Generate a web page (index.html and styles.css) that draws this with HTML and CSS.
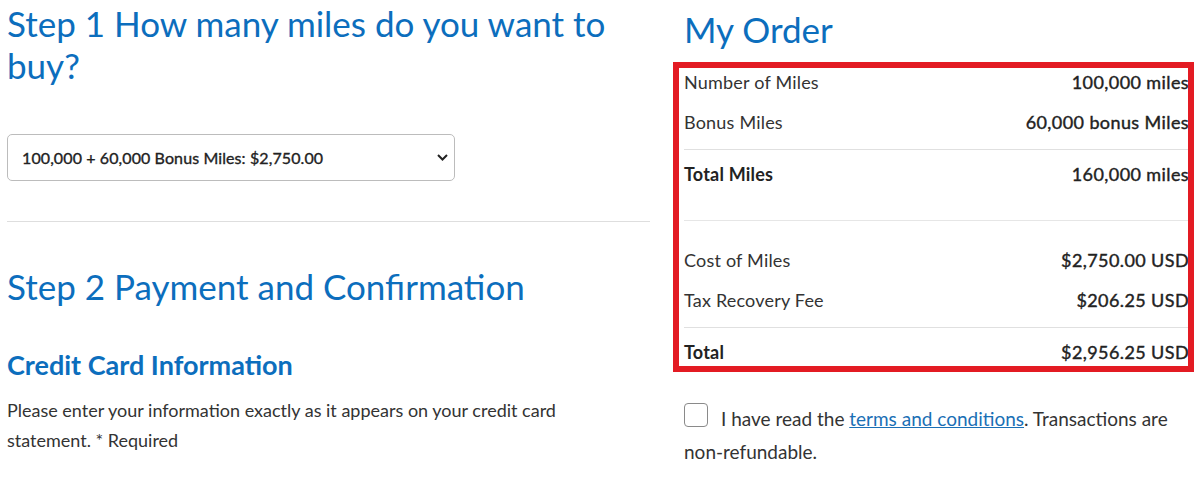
FILE: index.html
```html
<!DOCTYPE html>
<html lang="en">
<head>
	<meta charset="UTF-8">
	<title>Buy Miles</title>
	<link rel="stylesheet" href="styles.css">
</head>
<body>
	<div class="page">
		<div class="steps">
			<h1 class="step_title first">Step 1 How many miles do you want to buy?</h1>
			<div class="select_box">
				<span>100,000 + 60,000 Bonus Miles: $2,750.00</span>
				<svg width="11" height="7" viewBox="0 0 11 7"><path d="M1 1l4.5 4.5L10 1" fill="none" stroke="#222" stroke-width="2"/></svg>
			</div>
			<div class="divider"></div>
			<h2 class="step_title">Step 2 Payment and Confirmation</h2>
			<h3 class="sub_title">Credit Card Information</h3>
			<p class="note">Please enter your information exactly as it appears on your credit card statement. * Required</p>
		</div>
		<div class="order">
			<h2 class="order_title">My Order</h2>
			<div class="order_table">
				<div class="row"><span>Number of Miles</span><b>100,000 miles</b></div>
				<div class="row"><span>Bonus Miles</span><b>60,000 bonus Miles</b></div>
				<div class="row total"><span>Total Miles</span><b>160,000 miles</b></div>
				<div class="group">
					<div class="row"><span>Cost of Miles</span><b>$2,750.00 USD</b></div>
					<div class="row"><span>Tax Recovery Fee</span><b>$206.25 USD</b></div>
					<div class="row total"><span>Total</span><b>$2,956.25 USD</b></div>
				</div>
				<div class="frame"></div>
			</div>
			<p class="terms"><span class="check"></span>I have read the <a href="#">terms and conditions</a>. Transactions are non-refundable.</p>
		</div>
	</div>
</body>
</html>
```
FILE: styles.css
```css
body{
	margin:0;
	background:#fff;
	font-family:"Lato","Open Sans",sans-serif;
	color:#333;
}
.page{
	display:flex;
	padding:0 7px;
	gap:34px;
}
.steps{
	width:643px;
}
.order{
	width:505px;
}
.step_title,.order_title{
	font-size:35px;
	line-height:42px;
	font-weight:400;
	color:#0c6ebd;
	margin:0;
}
.step_title.first{
	margin-top:2px;
}
.select_box{
	margin-top:48px;
	width:448px;
	height:47px;
	box-sizing:border-box;
	border:1px solid #bcbcbc;
	border-radius:5px;
	padding:0 6px 0 14px;
	display:flex;
	align-items:center;
	justify-content:space-between;
	font-size:16px;
	letter-spacing:0.1px;
	color:#222;
	-webkit-text-stroke:0.35px #222;
}
.divider{
	margin-top:40px;
	height:1px;
	background:#dedede;
}
.steps h2.step_title{
	margin-top:43px;
}
.sub_title{
	margin:42px 0 0;
	font-size:27px;
	line-height:32px;
	font-weight:700;
	color:#0c6ebd;
}
.note{
	margin:14px 0 0;
	width:600px;
	font-size:18px;
	line-height:30px;
	color:#333;
}
.order_title{
	margin-top:8px;
}
.order_table{
	position:relative;
	margin-top:12px;
	font-size:18px;
}
.row{
	display:flex;
	justify-content:space-between;
	align-items:center;
	height:40px;
}
.row span{
	letter-spacing:0.2px;
}
.row b{
	font-weight:400;
	letter-spacing:0.4px;
	color:#222;
	-webkit-text-stroke:0.4px #222;
}
.row.total{
	margin-top:7px;
	border-top:1px solid #e0e0e0;
	padding-top:4px;
}
.row.total span{
	font-weight:700;
	color:#222;
}
.group{
	margin-top:26px;
	border-top:1px solid #e6e6e6;
	padding-top:19px;
}
.frame{
	position:absolute;
	top:0;
	left:-11px;
	right:-5px;
	bottom:0;
	border:6px solid #e31b23;
}
.terms{
	margin:30px 0 0;
	font-size:19px;
	line-height:33px;
	color:#333;
}
.check{
	display:inline-block;
	vertical-align:top;
	width:24px;
	height:24px;
	box-sizing:border-box;
	margin:1px 13px 0 0;
	border:1.5px solid #8a8a8a;
	border-radius:4px;
}
.terms a{
	color:#1a6fb5;
	text-decoration:underline;
}
```
